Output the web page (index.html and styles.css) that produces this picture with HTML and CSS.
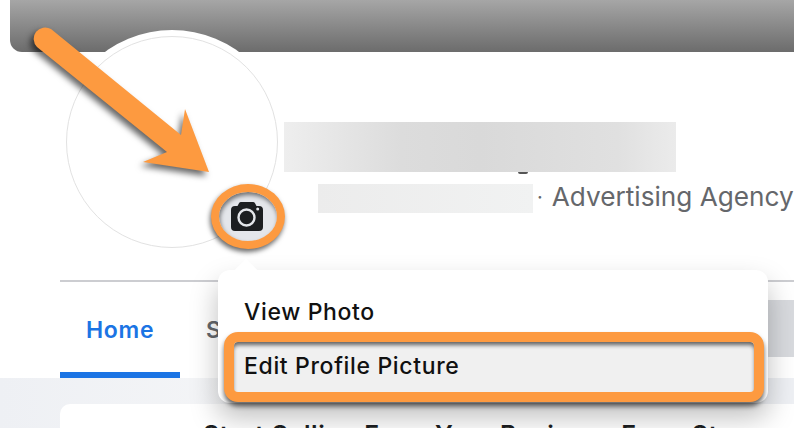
FILE: index.html
```html
<!DOCTYPE html>
<html>

<head>
	<meta charset="utf-8" />
	<title>Edit Profile Picture</title>
	<meta name="viewport" content="width=device-width, initial-scale=1" />
	<link rel="stylesheet" href="styles.css">
</head>

<body>
	<main class="page">
		<div class="cover"></div>

		<section class="profile">
			<div class="avatar"><div class="avatar-line"></div></div>
			<div class="info">
				<div class="blur-title"></div>
				<div class="meta">
					<div class="blur-meta"></div>
					<span class="dot">·</span>
					<span class="category">Advertising Agency</span>
				</div>
			</div>
		</section>

		<nav class="tabs">
			<div class="tab is-active">Home</div>
			<div class="tab">S</div>
			<div class="tabs-button"></div>
		</nav>

		<section class="content">
			<div class="card">Start Selling From Your Business From Store</div>
		</section>

		<div class="menu">
			<div class="menu-item">View Photo</div>
			<div class="menu-item is-hover">Edit Profile Picture</div>
		</div>

		<!-- annotation: arrow pointing at the camera button -->
		<svg class="arrow" width="240" height="200" viewBox="0 0 240 200">
			<path d="M37 47 A11.5 11.5 0 0 1 51 29 L181 135 L185 109 L209 172 L143 162 L167 152 Z" fill="#fd9a40" />
		</svg>

		<div class="camera-ring">
			<svg width="32" height="29" viewBox="0 0 32 29">
				<path d="M4 4 H6.500 L8 1.200 Q8.600 0 10 0 H22 Q23.400 0 24 1.200 L25.500 4 H28 Q32 4 32 8 V25 Q32 29 28 29 H4 Q0 29 0 25 V8 Q0 4 4 4 Z" fill="#1c1e21" />
				<circle cx="15.500" cy="15.500" r="8" fill="none" stroke="#e4e6eb" stroke-width="2.400" />
				<circle cx="26.700" cy="7" r="1.500" fill="#e4e6eb" />
			</svg>
		</div>
	</main>
</body>

</html>
```

FILE: styles.css
```css
* {
	box-sizing: border-box;
}

body {
	margin: 0;
	background-color: #ffffff;
}

.page {
	position: relative;
	width: 794px;
	height: 428px;
	overflow: hidden;
	font-family: 'Inter', 'Liberation Sans', sans-serif;
}

.cover {
	height: 52px;
	margin-left: 10px;
	border-bottom-left-radius: 12px;
	background: linear-gradient(#a6a6a6, #6c6c6c);
}

.profile {
	display: flex;
	height: 228px;
	padding-left: 58px;
}

.avatar {
	flex: none;
	width: 228px;
	height: 228px;
	margin-top: -22px;
	padding: 6px 8px;
	border-radius: 50%;
	background-color: #ffffff;
}

.avatar-line {
	width: 212px;
	height: 212px;
	border: 1.5px solid #e2e2e2;
	border-radius: 50%;
}

.info {
	padding-top: 70px;
}

.blur-title {
	position: relative;
	width: 392px;
	height: 50px;
	margin-left: -2px;
	background: linear-gradient(90deg, #eeeeee, #dcdcdc 30%, #d9d9d9 50%, #e0e0e0 85%, #ebebeb);
}

/* bit of the hidden name that sticks out under the blur */
.blur-title::after {
	content: "";
	position: absolute;
	left: 234px;
	top: 50px;
	width: 10px;
	height: 2px;
	border-radius: 0 0 5px 5px;
	background-color: #555555;
}

.meta {
	display: flex;
	align-items: flex-start;
	margin-top: 12px;
	padding-left: 32px;
	white-space: nowrap;
	line-height: 26px;
}

.blur-meta {
	width: 215px;
	height: 29px;
	background: linear-gradient(90deg, #ececec, #f1f2f2);
}

.dot {
	margin: 0 9px 0 4px;
	font-size: 20px;
	color: #65676b;
}

.category {
	font-size: 26.200px;
	color: #65676b;
}

.tabs {
	display: flex;
	align-items: flex-start;
	height: 98px;
	margin-left: 60px;
	border-top: 2px solid #cccdd1;
}

.tab {
	width: 120px;
	height: 96px;
	padding: 34px 26px 0 26px;
	font-size: 23px;
	font-weight: 600;
	letter-spacing: 0.7px;
	color: #65676b;
}

.tab.is-active {
	border-bottom: 6px solid #1b74e4;
	color: #1b74e4;
}

.tabs-button {
	width: 26px;
	height: 57px;
	margin: 18px 0 0 auto;
	background-color: #d8dade;
}

.content {
	height: 50px;
	padding: 26px 0 0 60px;
	background: linear-gradient(90deg, #eef0f4, #f4f5f7 30%, #eef0f4 60%);
}

.card {
	height: 60px;
	padding: 16px 0 0 143px;
	border-radius: 10px 0 0 0;
	background-color: #ffffff;
	font-size: 25px;
	font-weight: 600;
	letter-spacing: 0.6px;
	color: #1c1e21;
	white-space: nowrap;
}

/* popup menu, lies over the tabs */
.menu {
	position: absolute;
	left: 218px;
	top: 270px;
	width: 550px;
	height: 133px;
	padding-top: 22px;
	border-radius: 12px;
	background-color: #ffffff;
	box-shadow: 0 14px 28px rgba(0, 0, 0, 0.26);
}

.menu::before {
	content: "";
	position: absolute;
	left: 20px;
	top: -8px;
	width: 16px;
	height: 16px;
	background-color: #ffffff;
	transform: rotate(45deg);
}

.menu-item {
	position: relative;
	height: 40px;
	padding: 6px 0 0 26px;
	font-size: 23px;
	font-weight: 500;
	letter-spacing: 0.65px;
	line-height: 28px;
	color: #111111;
}

.menu-item.is-hover {
	width: 540px;
	height: 70px;
	margin-left: 6px;
	padding: 10px 0 0 10px;
	border: 10px solid #fd9a40;
	border-radius: 14px;
	background-color: #f0f0f0;
	box-shadow: 0 4px 5px rgba(0, 0, 0, 0.6), inset 0 4px 4px -1px rgba(0, 0, 0, 0.6);
}

.arrow {
	position: absolute;
	left: 0;
	top: 0;
	filter: drop-shadow(-3px 4px 3px rgba(0, 0, 0, 0.6));
}

.camera-ring {
	position: absolute;
	left: 211px;
	top: 184px;
	display: flex;
	align-items: center;
	justify-content: center;
	width: 74px;
	height: 65px;
	padding-right: 2px;
	border: 8px solid #fd9a40;
	border-radius: 50%;
	background-color: #e4e6eb;
	box-shadow: -1px 3px 5px rgba(0, 0, 0, 0.6), inset 1px 3px 4px rgba(0, 0, 0, 0.5);
}
```
